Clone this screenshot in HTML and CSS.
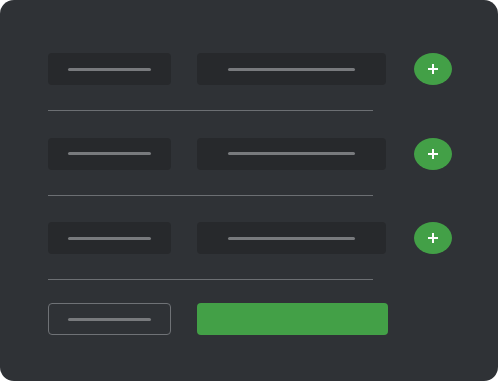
FILE: index.html
```html
<!DOCTYPE html>
<html lang="en">

<head>
  <meta charset="UTF-8" />
  <meta name="viewport" content="width=device-width, initial-scale=1.0" />
  <title>Form skeleton</title>
  <link rel="stylesheet" href="styles.css">
</head>

<body>
  <div class="panel">
    <div class="row">
      <div class="field field-short"><span class="bar"></span></div>
      <div class="field field-long"><span class="bar"></span></div>
      <button class="add" aria-label="Add">
        <svg width="12" height="12" viewBox="0 0 12 12"><path d="M6 1v10M1 6h10" stroke="#fff" stroke-width="2" /></svg>
      </button>
    </div>
    <div class="divider"></div>

    <div class="row">
      <div class="field field-short"><span class="bar"></span></div>
      <div class="field field-long"><span class="bar"></span></div>
      <button class="add" aria-label="Add">
        <svg width="12" height="12" viewBox="0 0 12 12"><path d="M6 1v10M1 6h10" stroke="#fff" stroke-width="2" /></svg>
      </button>
    </div>
    <div class="divider"></div>

    <div class="row">
      <div class="field field-short"><span class="bar"></span></div>
      <div class="field field-long"><span class="bar"></span></div>
      <button class="add" aria-label="Add">
        <svg width="12" height="12" viewBox="0 0 12 12"><path d="M6 1v10M1 6h10" stroke="#fff" stroke-width="2" /></svg>
      </button>
    </div>
    <div class="divider last"></div>

    <div class="actions">
      <button class="btn-outline"><span class="bar"></span></button>
      <button class="btn-primary"></button>
    </div>
  </div>
</body>

</html>
```

FILE: styles.css
```css
* {
  box-sizing: border-box;
  margin: 0;
  padding: 0;
}

body {
  font-family: 'Liberation Sans', sans-serif;
  background: #ffffff;
  width: 498px;
  height: 381px;
}

.panel {
  background: #2f3236;
  border-radius: 14px;
  width: 498px;
  height: 381px;
  padding: 53px 0 0 48px;
  display: flex;
  flex-direction: column;
}

.row {
  display: flex;
  align-items: center;
  height: 32px;
}

.row > * {
  flex-shrink: 0;
}

.field {
  background-color: #27292c;
  border-radius: 4px;
  height: 32px;
  display: flex;
  align-items: center;
  justify-content: center;
}

.field-short {
  width: 123px;
}

.field-long {
  width: 189px;
  margin-left: 26px;
}

.bar {
  display: block;
  height: 3px;
  border-radius: 2px;
  background-color: #787a7d;
}

.field-short .bar,
.btn-outline .bar {
  width: 83px;
}

.field-long .bar {
  width: 127px;
}

.add {
  margin-left: 28px;
  width: 38px;
  height: 32px;
  border: none;
  border-radius: 50%;
  background-color: #43a047;
  display: flex;
  align-items: center;
  justify-content: center;
}

.divider {
  width: 325px;
  height: 1px;
  background-color: #6c6f73;
  margin: 25px 0 26.5px;
}

.divider.last {
  margin-bottom: 23px;
}

.actions {
  display: flex;
  align-items: center;
}

.btn-outline {
  width: 123px;
  height: 32px;
  border: 1px solid #6f7276;
  border-radius: 4px;
  background: transparent;
  display: flex;
  align-items: center;
  justify-content: center;
}

.btn-primary {
  width: 191px;
  height: 32px;
  margin-left: 26px;
  border: none;
  border-radius: 4px;
  background-color: #43a047;
}
```
